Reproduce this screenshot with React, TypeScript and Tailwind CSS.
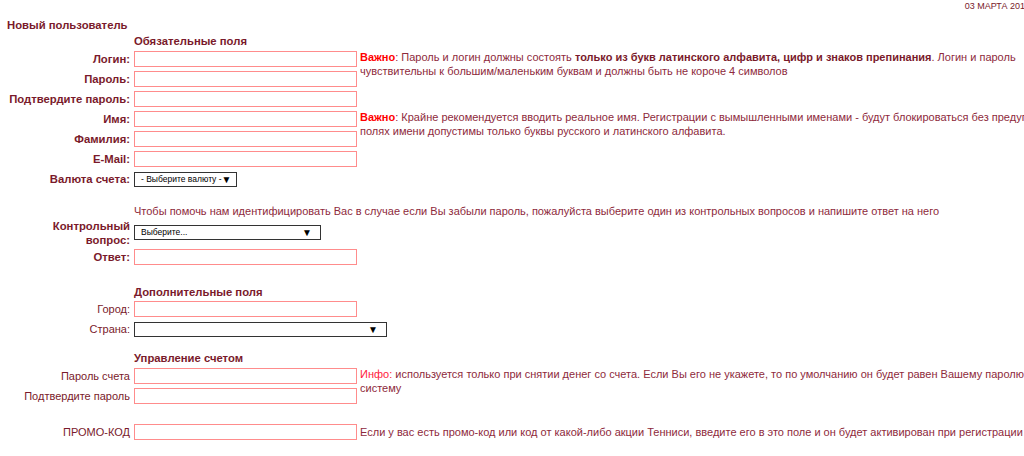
import React from "react";

const font = { fontFamily: "'Liberation Sans', Arial, sans-serif" };

function Field({ label, bold = true }: { label: string; bold?: boolean }) {
  return (
    <>
      <div
        className={`flex h-5 items-center justify-end whitespace-nowrap pr-[4px] text-[#7a1a2b] ${
          bold ? "text-[11.3px] font-bold" : "text-[11px]"
        }`}
      >
        {label}
      </div>
      <div className="flex h-5 items-center">
        <input type="text" className="h-4 w-[223px] border border-[#ff8c8c] bg-white outline-none" />
      </div>
    </>
  );
}

function Select({ text, width }: { text: string; width: string }) {
  return (
    <div
      className={`flex h-[15px] items-center justify-between whitespace-nowrap border border-[#333] bg-white pl-[6px] pr-2 text-[8.5px] text-black ${width}`}
    >
      <span>{text}</span>
      <span className="text-[10px]">▼</span>
    </div>
  );
}

export default function App() {
  return (
    <div className="h-[456px] w-[1024px] overflow-hidden bg-white" style={font}>
      <div className="w-[1200px] text-[11px] text-[#8e2a3c]">
        <div className="flex h-[17px] w-[1030px] items-start justify-end pt-[1px] text-[9px] uppercase leading-[10px] text-[#7a1a2b]">
          03 марта 2019
        </div>
        <div className="flex h-4 items-center pl-[7px] text-[11.3px] font-bold text-[#7a1a2b]">Новый пользователь</div>

        <div className="grid grid-cols-[134px_226px_732px] items-start">
          <div />
          <div className="col-span-2 flex h-[16px] items-center text-[11.3px] font-bold text-[#7a1a2b]">
            Обязательные поля
          </div>

          <Field label="Логин:" />
          <div className="row-span-3 pt-[1px] leading-[14px]">
            <b className="text-[#ff0000]">Важно</b>: Пароль и логин должны состоять{" "}
            <b className="text-[#7a1a2b]">только из букв латинского алфавита, цифр и знаков препинания</b>. Логин и пароль
            чувствительны к большим/маленьким буквам и должны быть не короче 4 символов
          </div>
          <Field label="Пароль:" />
          <Field label="Подтвердите пароль:" />

          <Field label="Имя:" />
          <div className="row-span-3 pt-[1px] leading-[14px]">
            <b className="text-[#ff0000]">Важно</b>: Крайне рекомендуется вводить реальное имя. Регистрации с вымышленными
            именами - будут блокироваться без предупреждения. В полях имени допустимы только буквы русского и латинского
            алфавита.
          </div>
          <Field label="Фамилия:" />
          <Field label="E-Mail:" />

          <div className="flex h-5 items-center justify-end whitespace-nowrap pr-[4px] text-[11.3px] font-bold text-[#7a1a2b]">
            Валюта счета:
          </div>
          <div className="col-span-2 flex h-5 items-center">
            <Select text="- Выберите валюту -" width="w-[103px]" />
          </div>

          <div className="col-span-3 h-[15px]" />

          <div />
          <div className="col-span-2 flex h-[14px] items-center whitespace-nowrap">
            Чтобы помочь нам идентифицировать Вас в случае если Вы забыли пароль, пожалуйста выберите один из контрольных
            вопросов и напишите ответ на него
          </div>

          <div className="flex h-[29px] flex-col items-end justify-center pr-[4px] text-right text-[11.3px] font-bold leading-[14px] text-[#7a1a2b]">
            <span>Контрольный</span>
            <span>вопрос:</span>
          </div>
          <div className="col-span-2 flex h-[29px] items-center">
            <Select text="Выберите..." width="w-[187px]" />
          </div>

          <Field label="Ответ:" />
          <div />

          <div className="col-span-3 h-[18px]" />
          <div />
          <div className="col-span-2 flex h-[14px] items-center text-[11.3px] font-bold text-[#7a1a2b]">
            Дополнительные поля
          </div>

          <Field label="Город:" bold={false} />
          <div />
          <div className="flex h-5 items-center justify-end pr-[4px] text-[11px] text-[#7a1a2b]">Страна:</div>
          <div className="col-span-2 flex h-5 items-center">
            <Select text="" width="w-[253px]" />
          </div>

          <div className="col-span-3 h-[11px]" />
          <div />
          <div className="col-span-2 flex h-[16px] items-center text-[11.3px] font-bold text-[#7a1a2b]">
            Управление счетом
          </div>

          <Field label="Пароль счета" bold={false} />
          <div className="row-span-2 pt-[1px] leading-[14px]">
            <span className="text-[#ff1a3c]">Инфо:</span> используется только при снятии денег со счета. Если Вы его не
            укажете, то по умолчанию он будет равен Вашему паролю для входа в систему
          </div>
          <Field label="Подтвердите пароль" bold={false} />

          <div className="col-span-3 h-4" />

          <Field label="ПРОМО-КОД" bold={false} />
          <div className="flex h-5 items-center whitespace-nowrap">
            Если у вас есть промо-код или код от какой-либо акции Тенниси, введите его в это поле и он будет активирован при
            регистрации
          </div>
        </div>
      </div>
    </div>
  );
}
